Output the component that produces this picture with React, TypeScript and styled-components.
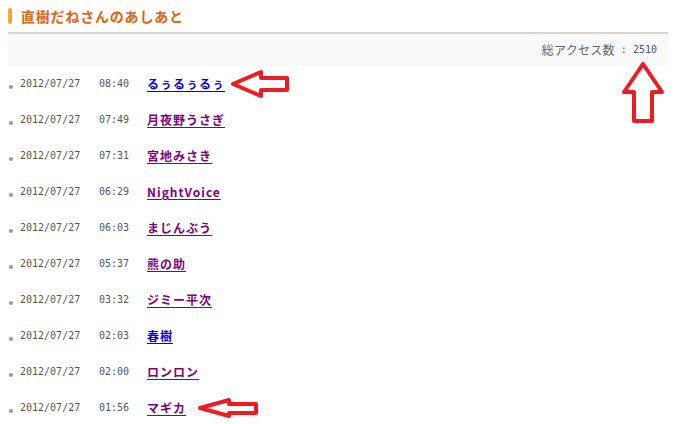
import React from "react";
import styled, { createGlobalStyle } from "styled-components";

const GlobalStyle = createGlobalStyle`
  html, body { margin: 0; padding: 0; background: #ffffff; }
  body { font-family: "Noto Sans CJK JP", "Noto Sans", sans-serif; }
`;

const Page = styled.div`
  position: relative;
  width: 681px;
  height: 424px;
  padding: 8px;
  box-sizing: border-box;
  overflow: hidden;
`;

const Panel = styled.section`
  width: 660px;
  display: flex;
  flex-direction: column;
`;

const Header = styled.h2`
  margin: 0;
  height: 24px;
  display: flex;
  align-items: flex-start;
  gap: 9px;
  border-bottom: 2px solid #ddd2c2;
  box-sizing: content-box;
`;

const Marker = styled.span`
  width: 4px;
  height: 16px;
  border-radius: 2px;
  background: linear-gradient(90deg, #f9b040 0%, #f49a1a 100%);
`;

const Title = styled.span`
  font-family: "Noto Sans CJK JP", sans-serif;
  font-size: 14px;
  font-weight: 700;
  line-height: 16px;
  letter-spacing: 0.8px;
  color: #e2620e;
`;

const TotalBar = styled.div`
  height: 32px;
  background: #f9f9f9;
  display: flex;
  align-items: center;
  justify-content: flex-end;
  padding-right: 11px;
  color: #666666;
`;

const TotalLabel = styled.span`
  font-family: "Noto Sans CJK JP", sans-serif;
  font-size: 12px;
  line-height: 14px;
  letter-spacing: 0.3px;
`;

const Mono = styled.span`
  font-family: "DejaVu Sans Mono", "Liberation Mono", monospace;
  font-size: 10px;
  line-height: 14px;
  white-space: pre;
  color: #555555;
`;

const List = styled.ul`
  list-style: none;
  margin: 0;
  padding: 0;
`;

const Row = styled.li`
  height: 36px;
  display: flex;
  align-items: center;
`;

const Bullet = styled.span`
  width: 12px;
  display: flex;
  justify-content: flex-start;
  align-self: center;
  padding-top: 6px;
  &::before {
    content: "";
    display: block;
    margin-left: 1px;
    width: 4px;
    height: 4px;
    border-radius: 50%;
    background: #9a9a9a;
  }
`;

const Cell = styled(Mono)<{ $w: number }>`
  width: ${(p) => p.$w}px;
  color: #555555;
`;

const Name = styled.a<{ $visited: boolean }>`
  font-family: "Noto Sans CJK JP", sans-serif;
  font-size: 12px;
  font-weight: 700;
  line-height: 14px;
  letter-spacing: 1px;
  color: ${(p) => (p.$visited ? "#800080" : "#0000ee")};
  text-decoration: underline;
  text-underline-offset: 2px;
  cursor: pointer;
`;

const Overlay = styled.svg`
  position: absolute;
  left: 0;
  top: 0;
  width: 681px;
  height: 424px;
  pointer-events: none;
`;

const entries = [
  { time: "08:40", name: "るぅるぅるぅ", visited: false },
  { time: "07:49", name: "月夜野うさぎ", visited: true },
  { time: "07:31", name: "宮地みさき", visited: true },
  { time: "06:29", name: "NightVoice", visited: true },
  { time: "06:03", name: "まじんぶう", visited: true },
  { time: "05:37", name: "熊の助", visited: true },
  { time: "03:32", name: "ジミー平次", visited: true },
  { time: "02:03", name: "春樹", visited: false },
  { time: "02:00", name: "ロンロン", visited: true },
  { time: "01:56", name: "マギカ", visited: true },
];

const arrowProps = {
  fill: "#ffffff",
  stroke: "#ed1c24",
  strokeWidth: 4,
  strokeLinejoin: "round" as const,
};

export default function App() {
  return (
    <Page>
      <GlobalStyle />
      <Panel>
        <Header>
          <Marker />
          <Title>直樹だねさんのあしあと</Title>
        </Header>
        <TotalBar>
          <TotalLabel>総アクセス数</TotalLabel>
          <Mono> : 2510</Mono>
        </TotalBar>
        <List>
          {entries.map((e, i) => (
            <Row key={i}>
              <Bullet />
              <Cell $w={79}>2012/07/27</Cell>
              <Cell $w={48}>{e.time}</Cell>
              <Name $visited={e.visited}>{e.name}</Name>
            </Row>
          ))}
        </List>
      </Panel>
      <Overlay viewBox="0 0 681 424">
        <polygon
          points="233,84 261,72 261,78 287,78 287,90 261,90 261,96"
          {...arrowProps}
        />
        <polygon
          points="643,64 624,92 634,92 634,121 652,121 652,92 662,92"
          {...arrowProps}
        />
        <polygon
          points="200,408 229,400 229,404 256,404 256,413 229,413 229,416"
          {...arrowProps}
        />
      </Overlay>
    </Page>
  );
}
